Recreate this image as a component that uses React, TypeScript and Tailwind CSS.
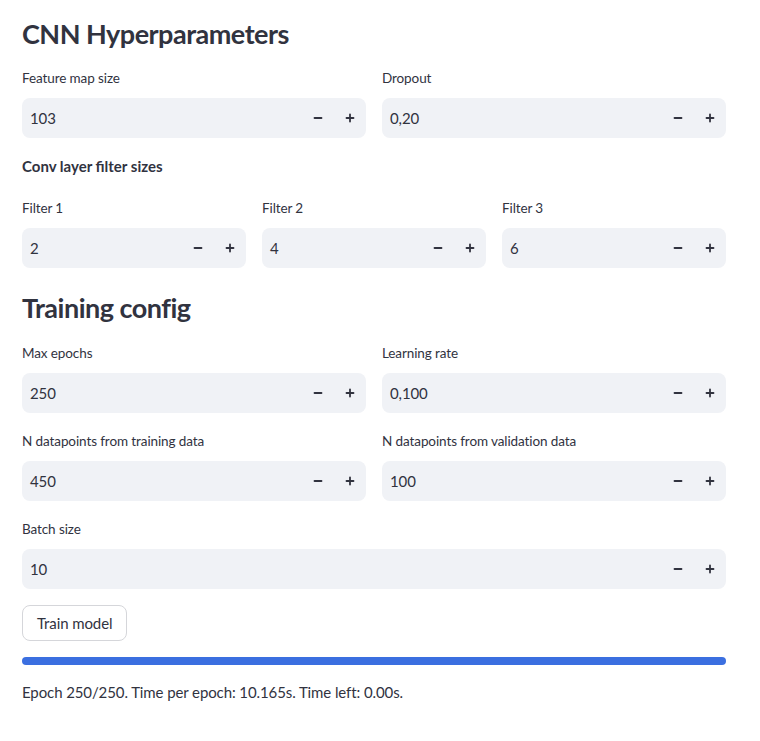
import { Minus, Plus } from 'lucide-react';

interface NumberInputProps {
  label: string;
  value: string;
}

function NumberInput({ label, value }: NumberInputProps) {
  return (
    <div className="flex min-w-0 flex-1 flex-col">
      <div className="flex h-5 items-center text-[13.5px] leading-5 tracking-[-0.1px]">{label}</div>
      <div className="mt-[10px] flex h-10 items-center rounded-lg bg-[#f0f2f6]">
        <div className="flex-1 pl-2 text-[15px] tracking-[-0.1px]">{value}</div>
        <button className="flex h-10 w-8 items-center justify-center">
          <Minus className="h-[12px] w-[12px]" strokeWidth={3.6} />
        </button>
        <button className="flex h-10 w-8 items-center justify-center">
          <Plus className="h-[12px] w-[12px]" strokeWidth={3.6} />
        </button>
      </div>
    </div>
  );
}

export default function App() {
  return (
    <div
      className="min-h-[741px] w-[760px] bg-white text-[#31333f]"
      style={{ fontFamily: 'Lato, "Noto Sans", sans-serif' }}
    >
      <div className="ml-[22px] flex w-[704px] flex-col pt-[14px]">
        <h2 className="flex h-10 items-center text-[27px] font-bold tracking-[-0.5px]">CNN Hyperparameters</h2>

        <div className="mt-[14px] flex gap-4">
          <NumberInput label="Feature map size" value="103" />
          <NumberInput label="Dropout" value="0,20" />
        </div>

        <div className="mt-[18px] flex h-5 items-center text-[15px] font-bold">Conv layer filter sizes</div>

        <div className="mt-[22px] flex gap-4">
          <NumberInput label="Filter 1" value="2" />
          <NumberInput label="Filter 2" value="4" />
          <NumberInput label="Filter 3" value="6" />
        </div>

        <h2 className="mt-[20px] flex h-10 items-center text-[27px] font-bold tracking-[-0.5px]">Training config</h2>

        <div className="mt-[15px] flex gap-4">
          <NumberInput label="Max epochs" value="250" />
          <NumberInput label="Learning rate" value="0,100" />
        </div>

        <div className="mt-[18px] flex gap-4">
          <NumberInput label="N datapoints from training data" value="450" />
          <NumberInput label="N datapoints from validation data" value="100" />
        </div>

        <div className="mt-[18px] flex gap-4">
          <NumberInput label="Batch size" value="10" />
        </div>

        <div className="mt-4">
          <button className="h-9 rounded-lg border border-[#d5d6da] bg-white px-[14px] text-[15px] tracking-[-0.1px]">
            Train model
          </button>
        </div>

        <div className="mt-4 h-2 w-full rounded-full bg-[#3b6fe0]" />

        <div className="mt-[17px] flex h-5 items-center text-[15px] tracking-[-0.1px]">
          Epoch 250/250. Time per epoch: 10.165s. Time left: 0.00s.
        </div>
      </div>
    </div>
  );
}
